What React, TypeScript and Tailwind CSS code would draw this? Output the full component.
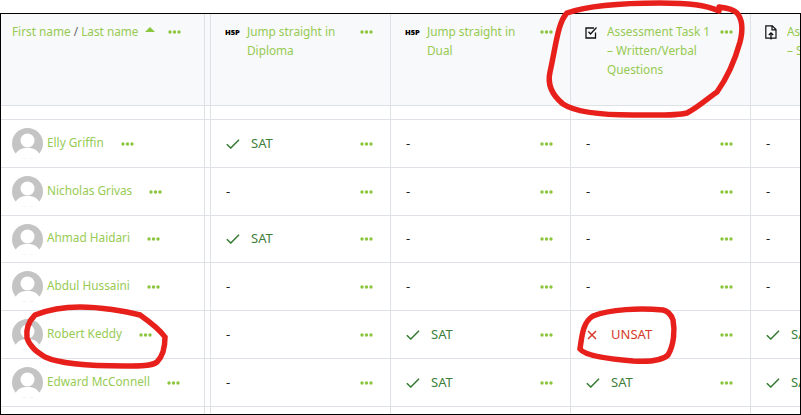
import React from 'react';

type Grade = 'sat' | 'unsat' | 'none';

const rows: { name: string; height: string; grades: Grade[] }[] = [
  { name: 'Elly Griffin', height: 'h-[48px]', grades: ['sat', 'none', 'none', 'none'] },
  { name: 'Nicholas Grivas', height: 'h-[48px]', grades: ['none', 'none', 'none', 'none'] },
  { name: 'Ahmad Haidari', height: 'h-[47px]', grades: ['sat', 'none', 'none', 'none'] },
  { name: 'Abdul Hussaini', height: 'h-[48px]', grades: ['none', 'none', 'none', 'none'] },
  { name: 'Robert Keddy', height: 'h-[48px]', grades: ['none', 'sat', 'unsat', 'sat'] },
  { name: 'Edward McConnell', height: 'h-[48px]', grades: ['none', 'sat', 'sat', 'sat'] },
];

const Dots = ({ className = '' }: { className?: string }) => (
  <svg width="13" height="4" viewBox="0 0 13 4" className={`shrink-0 ${className}`}>
    <circle cx="2" cy="2" r="1.7" fill="#8cc63f" />
    <circle cx="6.5" cy="2" r="1.7" fill="#8cc63f" />
    <circle cx="11" cy="2" r="1.7" fill="#8cc63f" />
  </svg>
);

const Avatar = () => (
  <svg width="31" height="31" viewBox="0 0 31 31" className="shrink-0">
    <circle cx="15.5" cy="15.5" r="15.5" fill="#c4c4c4" />
    <circle cx="15.5" cy="12.5" r="7" fill="#fff" />
    <path d="M3 27c3-6 7-7 12.5-7S25 21 28 27c-3 3-8 4-12.5 4S6 30 3 27z" fill="#fff" />
  </svg>
);

const GradeCell = ({ grade }: { grade: Grade }) => {
  if (grade === 'none') return <span className="text-[13px] text-[#1d2125]">-</span>;
  const sat = grade === 'sat';
  return (
    <span className={`flex items-center text-[13px] ${sat ? 'text-[#40803d]' : 'text-[#d63a2a]'}`}>
      {sat ? (
        <svg width="14" height="10" viewBox="0 0 14 10" className="mr-[11px]">
          <path d="M.8 5.2 4.8 9l8.2-8.2" fill="none" stroke="#357a32" strokeWidth="1.5" />
        </svg>
      ) : (
        <svg width="10" height="10" viewBox="0 0 10 10" className="mr-[14px] ml-[1px]">
          <path d="M1 1l8 8M9 1 1 9" fill="none" stroke="currentColor" strokeWidth="1.5" />
        </svg>
      )}
      {sat ? 'SAT' : 'UNSAT'}
    </span>
  );
};

const H5p = () => (
  <span className="w-[22px] shrink-0 pt-[1px] text-[7.5px] leading-[19px] font-black tracking-[-0.1px] text-black">
    H5P
  </span>
);

const TaskIcon = () => (
  <svg width="13" height="13" viewBox="0 0 13 13" className="mt-[4px] mr-[9px] shrink-0">
    <path d="M10.5 6.5v5.5H1V2h8" fill="none" stroke="#111" strokeWidth="1.3" />
    <path d="M3.5 5.8 5.5 8l6-6.5" fill="none" stroke="#111" strokeWidth="1.3" />
  </svg>
);

const UploadIcon = () => (
  <svg width="12" height="15" viewBox="0 0 12 15" className="mt-[3px] mr-[10px] shrink-0">
    <path d="M.8.8h6.5L11 4.5v8.7H.8zM7 .8v4h4" fill="none" stroke="#111" strokeWidth="1.2" />
    <path d="M6 14.5V8M3.8 10 6 7.8 8.2 10" fill="none" stroke="#111" strokeWidth="1.3" />
  </svg>
);

const HeaderCell = ({ icon, lines, last = false }: { icon: React.ReactNode; lines: string[]; last?: boolean }) => (
  <div className={`flex shrink-0 pt-[8px] pl-[14px] ${last ? 'w-[60px]' : 'w-[180px] border-r border-[#dee2e6] pr-[17px]'}`}>
    {icon}
    <div className="flex-1 text-[11.8px] leading-[19px] whitespace-nowrap text-[#8cc63f] opacity-90">
      {lines.map((line) => (
        <div key={line}>{line}</div>
      ))}
    </div>
    {!last && <Dots className="mt-[8px]" />}
  </div>
);

const App = () => {
  return (
    <div className="relative h-[415px] w-[801px] overflow-hidden bg-white pt-[13px] font-['Noto_Sans',sans-serif]">
      <div className="h-[402px] overflow-hidden border border-black">
        {/* header */}
        <div className="flex h-[92px] border-b border-[#dee2e6] bg-[#f8f9fa]">
          <div className="flex w-[203px] shrink-0 items-start pt-[8px] pl-[11px] text-[11.8px] leading-[19px] text-[#8cc63f]">
            <span className="whitespace-nowrap opacity-90">
              First name <span className="text-[#555]">/</span> Last name
            </span>
            <svg width="10" height="5" viewBox="0 0 10 5" className="mt-[5px] ml-[6px] shrink-0">
              <path d="M5 0l5 5H0z" fill="#8cc63f" />
            </svg>
            <Dots className="mt-[8px] ml-[13px]" />
          </div>
          <div className="w-[7px] shrink-0 border-x border-[#dee2e6]" />
          <HeaderCell icon={<H5p />} lines={['Jump straight in', 'Diploma']} />
          <HeaderCell icon={<H5p />} lines={['Jump straight in', 'Dual']} />
          <HeaderCell icon={<TaskIcon />} lines={['Assessment Task 1', '– Written/Verbal', 'Questions']} />
          <HeaderCell icon={<UploadIcon />} lines={['Assessment Task 2', '– Skills']} last />
        </div>

        {/* spacer row */}
        <div className="flex h-[14px] border-b border-[#dee2e6]">
          <div className="w-[203px] shrink-0" />
          <div className="w-[7px] shrink-0 border-x border-[#dee2e6]" />
          {[0, 1, 2].map((i) => (
            <div key={i} className="w-[180px] shrink-0 border-r border-[#dee2e6]" />
          ))}
        </div>

        {rows.map((row) => (
          <div key={row.name} className={`flex ${row.height} border-b border-[#dee2e6]`}>
            <div className="flex w-[203px] shrink-0 items-center pl-[11px]">
              <Avatar />
              <span className="ml-[4px] -translate-y-[1px] text-[11.8px] whitespace-nowrap text-[#8cc63f] opacity-90">
                {row.name}
              </span>
              <Dots className="ml-[17px]" />
            </div>
            <div className="w-[7px] shrink-0 border-x border-[#dee2e6]" />
            {row.grades.map((grade, i) => (
              <div
                key={i}
                className={`flex shrink-0 items-center justify-between pr-[17px] pl-[15px] ${i === 3 ? 'w-[60px] overflow-hidden' : 'w-[180px] border-r border-[#dee2e6]'}`}
              >
                <GradeCell grade={grade} />
                {i < 3 && <Dots />}
              </div>
            ))}
          </div>
        ))}

        {/* bottom of the cut-off row */}
        <div className="flex h-full">
          <div className="w-[203px] shrink-0" />
          <div className="w-[7px] shrink-0 border-x border-[#dee2e6]" />
          {[0, 1, 2].map((i) => (
            <div key={i} className="w-[180px] shrink-0 border-r border-[#dee2e6]" />
          ))}
        </div>
      </div>

      {/* red pen marks drawn over the screenshot */}
      <svg width="801" height="415" viewBox="0 0 801 415" fill="none" className="pointer-events-none absolute top-0 left-0">
        <path
          d="M719 11C705 5 690 3 660 3C630 3 590 5 567 13C558 22 556 45 550 72C547 85 552 95 563 104C575 112 600 115 633 115C655 115 675 116 687 113C700 106 708 98 717 92C727 78 735 60 740 42C743 30 743 20 737 13C733 9 727 8 719 7"
          stroke="#e8201c"
          strokeWidth="5.5"
          strokeLinecap="round"
        />
        <path
          d="M140 315C125 311 100 307 80 307C60 307 45 311 35 315C28 322 26 330 27 338C30 347 37 352 45 357C60 364 90 366 125 366C140 366 152 366 157 362C163 356 165 345 165 337C160 330 150 322 140 315"
          stroke="#e8201c"
          strokeWidth="5.5"
          strokeLinecap="round"
        />
        <path
          d="M663 310C640 308 610 309 593 316C583 322 582 335 580 349C585 356 610 359 633 361C650 362 662 361 668 355C674 345 675 330 673 320C671 314 667 311 663 310"
          stroke="#e8201c"
          strokeWidth="5.5"
          strokeLinecap="round"
        />
      </svg>
    </div>
  );
};

export default App;
